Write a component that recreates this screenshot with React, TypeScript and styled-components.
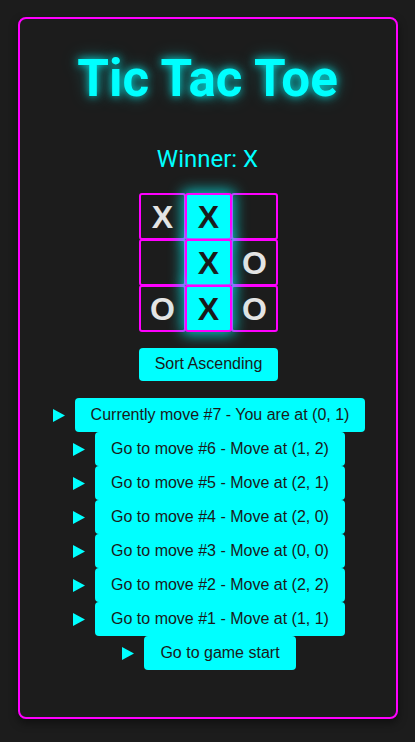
import React from 'react';
import styled, { createGlobalStyle } from 'styled-components';

const Global = createGlobalStyle`
  html, body {
    margin: 0;
    padding: 0;
    background: #1c1c1c;
  }
  body {
    font-family: Roboto, "Liberation Sans", Arial, sans-serif;
  }
`;

const Page = styled.div`
  display: flex;
  justify-content: center;
  padding: 17px 0 23px;
`;

const Card = styled.main`
  width: 380px;
  box-sizing: border-box;
  border: 2px solid #ff00ff;
  border-radius: 8px;
  background: #1c1c1c;
  box-shadow: 0 4px 10px rgba(0, 0, 0, 0.45);
  padding: 32px 16px;
  display: flex;
  flex-direction: column;
  align-items: center;
`;

const Title = styled.h1`
  margin: 0;
  font-family: Roboto, "Liberation Sans", Arial, sans-serif;
  font-size: 51.2px;
  line-height: 1.1;
  font-weight: 700;
  color: #00ffff;
  text-shadow: 0 0 8px rgba(0, 255, 255, 0.8), 0 0 18px rgba(0, 255, 255, 0.35);
`;

const Status = styled.div`
  margin-top: 38px;
  font-size: 24px;
  line-height: 28px;
  color: #00ffff;
`;

const Board = styled.div`
  margin-top: 20px;
  margin-left: 2px;
  display: flex;
  flex-direction: column;
`;

const Row = styled.div`
  display: flex;
  & + & {
    margin-top: -1px;
  }
`;

const Cell = styled.button<{ $win: boolean }>`
  width: 47px;
  height: 47px;
  box-sizing: border-box;
  margin: 0;
  padding: 0;
  border: 2px solid #ff00ff;
  border-radius: 3px;
  font-family: "Liberation Sans", Arial, sans-serif;
  font-size: 32px;
  font-weight: 700;
  line-height: 1;
  display: flex;
  align-items: center;
  justify-content: center;
  position: relative;
  z-index: ${(p) => (p.$win ? 1 : 0)};
  background: ${(p) => (p.$win ? '#00ffff' : '#1c1c1c')};
  color: ${(p) => (p.$win ? '#1a1a1a' : '#e4e4e4')};
  box-shadow: ${(p) => (p.$win ? '0 0 14px 3px rgba(0, 255, 255, 0.7)' : 'none')};
  & + & {
    margin-left: -1px;
  }
`;

const ActionButton = styled.button`
  font-family: "Liberation Sans", Arial, sans-serif;
  font-size: 16px;
  line-height: 18px;
  padding: 8px 16px;
  border: none;
  border-radius: 4px;
  background: #00ffff;
  color: #1a1a1a;
  cursor: pointer;
  white-space: nowrap;
`;

const SortButton = styled(ActionButton)`
  margin-top: 16px;
  margin-left: 2px;
  padding: 7px 16px 8px;
`;

const MoveList = styled.ol`
  margin: 17px 0 15px 3px;
  padding: 0;
  list-style: none;
  display: flex;
  flex-direction: column;
  align-items: center;
`;

const MoveItem = styled.li`
  display: flex;
  align-items: center;
  gap: 10px;
`;

const Marker = () => (
  <svg width="12" height="13" viewBox="0 0 12 13" aria-hidden="true">
    <polygon points="0,0 12,6.5 0,13" fill="#00ffff" />
  </svg>
);

const board: { v: string; win: boolean }[][] = [
  [
    { v: 'X', win: false },
    { v: 'X', win: true },
    { v: '', win: false },
  ],
  [
    { v: '', win: false },
    { v: 'X', win: true },
    { v: 'O', win: false },
  ],
  [
    { v: 'O', win: false },
    { v: 'X', win: true },
    { v: 'O', win: false },
  ],
];

const moves = [
  'Currently move #7 - You are at (0, 1)',
  'Go to move #6 - Move at (1, 2)',
  'Go to move #5 - Move at (2, 1)',
  'Go to move #4 - Move at (2, 0)',
  'Go to move #3 - Move at (0, 0)',
  'Go to move #2 - Move at (2, 2)',
  'Go to move #1 - Move at (1, 1)',
  'Go to game start',
];

export default function App() {
  return (
    <>
      <Global />
      <Page>
        <Card>
          <Title>Tic Tac Toe</Title>
          <Status>Winner: X</Status>
          <Board>
            {board.map((row, r) => (
              <Row key={r}>
                {row.map((c, i) => (
                  <Cell key={i} $win={c.win}>
                    {c.v}
                  </Cell>
                ))}
              </Row>
            ))}
          </Board>
          <SortButton>Sort Ascending</SortButton>
          <MoveList>
            {moves.map((m) => (
              <MoveItem key={m}>
                <Marker />
                <ActionButton>{m}</ActionButton>
              </MoveItem>
            ))}
          </MoveList>
        </Card>
      </Page>
    </>
  );
}
